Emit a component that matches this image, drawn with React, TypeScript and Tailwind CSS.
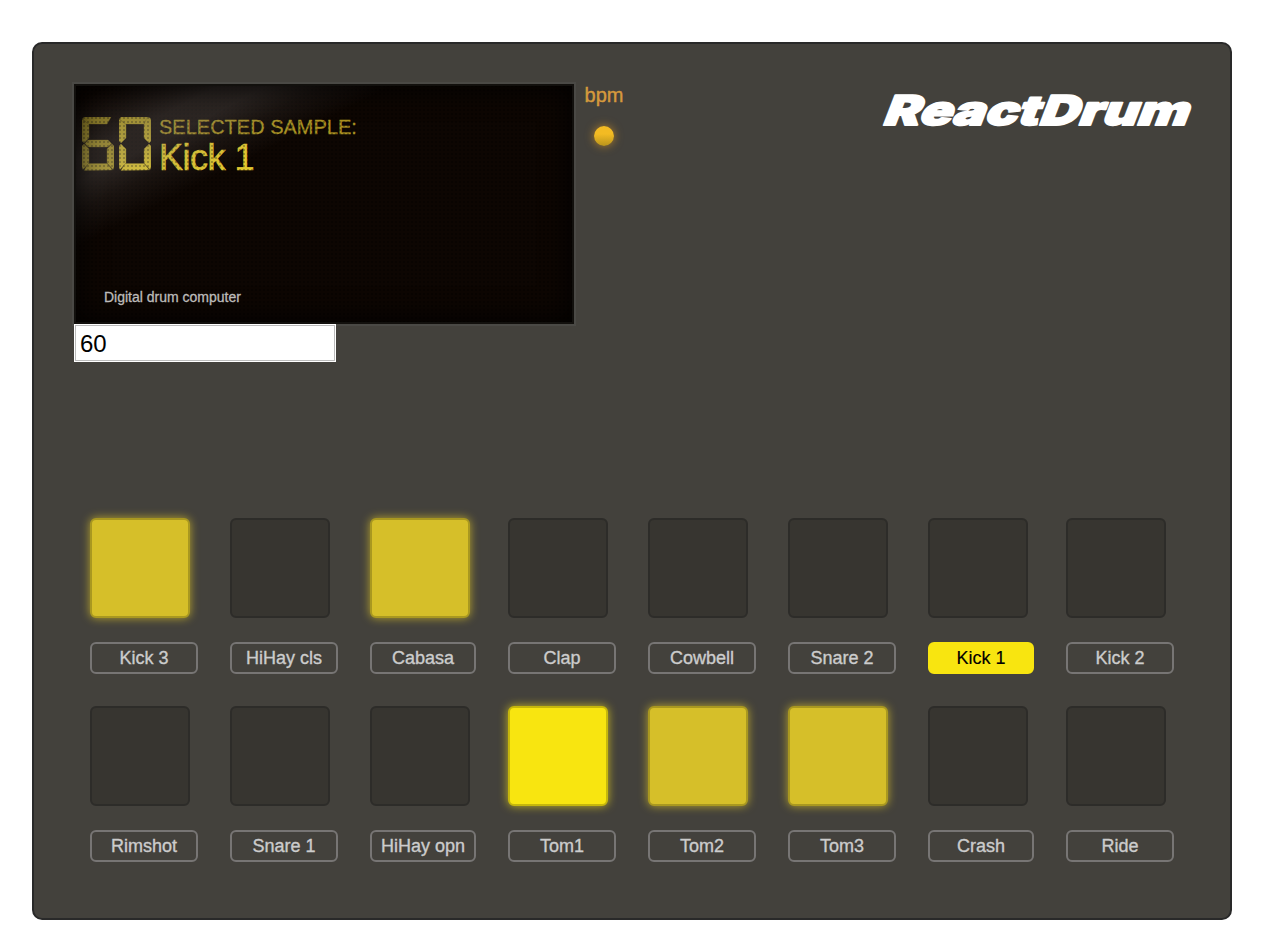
import React from "react";

const rows = [
  [["Kick 3", 1], ["HiHay cls", 0], ["Cabasa", 1], ["Clap", 0], ["Cowbell", 0], ["Snare 2", 0], ["Kick 1", 0], ["Kick 2", 0]],
  [["Rimshot", 0], ["Snare 1", 0], ["HiHay opn", 0], ["Tom1", 2], ["Tom2", 1], ["Tom3", 1], ["Crash", 0], ["Ride", 0]],
] as [string, number][][];

const padStyles = [
  "bg-[#373530] border-[#2d2c29]",
  "bg-[#d6bf29] border-[#a99820] shadow-[0_0_10px_rgba(212,189,42,0.8)]",
  "bg-[#f8e510] border-[#c6b70c] shadow-[0_0_10px_rgba(230,210,30,0.8)]",
];

const segments: Record<string, string> = {
  a: "2,0 29,0 25,7 6,7 0.5,2",
  b: "28,0 31,1 32,3 32,24 30,26 25,21 25,7.5",
  c: "30,27 32,29 32,50 31,52.5 25,46 25,32",
  d: "6,46.5 25,46.5 30.5,53 2,53.5",
  e: "2,27 7,32 7,46 1,52.5 0,50 0,29",
  f: "0,3 0.5,2.5 7,7.5 7,21 2,26 0,24",
  g: "6,23 26,23 29.5,26.5 26,30 6,30 3,26.5",
};

const lit: Record<string, string> = {
  "0": "abcdef", "1": "bc", "2": "abdeg", "3": "abcdg", "4": "bcfg",
  "5": "acdfg", "6": "acdefg", "7": "abc", "8": "abcdefg", "9": "abcdfg",
};

function Digit({ value }: { value: string }) {
  return (
    <svg className="h-[54px] w-[32px]" viewBox="0 0 32 54" fill="url(#glow)">
      <defs>
        <linearGradient id="glow" x1="0" y1="0" x2="0" y2="54" gradientUnits="userSpaceOnUse">
          <stop offset="0" stopColor="#a99522" />
          <stop offset="1" stopColor="#e3cb32" />
        </linearGradient>
      </defs>
      {lit[value].split("").map((s) => (
        <polygon key={s} points={segments[s]} stroke="#8a7821" strokeWidth="0.4" />
      ))}
    </svg>
  );
}

function Screen() {
  return (
    <div className="relative h-[244px] w-[504px] shrink-0 border-2 border-[#4a4945] bg-[#0d0602] font-['Liberation_Sans',sans-serif]">
      <div className="flex h-full flex-col pl-2 pt-[33px]">
        <div className="flex">
          <div className="flex gap-[5px]" role="img" aria-label="60">
            <div className="opacity-80"><Digit value="6" /></div>
            <Digit value="0" />
          </div>
          <div className="ml-2 text-[#e0c72f]">
            <div className="text-[20px] leading-5 text-[#a99221] [-webkit-text-stroke:0.3px]">SELECTED SAMPLE:</div>
            <div className="pt-px text-[36px] leading-[40px] tracking-[-0.5px] [-webkit-text-stroke:0.6px]">Kick 1</div>
          </div>
        </div>
        <div className="relative z-10 ml-[22px] mt-[109px] text-[14px] leading-5 text-[#bdbbb9] [-webkit-text-stroke:0.3px]">Digital drum computer</div>
      </div>
      <div className="pointer-events-none absolute inset-0 bg-[radial-gradient(circle,rgba(0,0,0,0.28)_0.8px,transparent_1.3px)] bg-[size:4px_4px]" />
      <div className="pointer-events-none absolute inset-0 border-2 border-[#12100d] bg-[linear-gradient(153deg,rgba(255,255,255,0)_3%,rgba(125,120,120,0.28)_15%,rgba(125,120,120,0.28)_20%,rgba(125,120,120,0.12)_26%,rgba(255,255,255,0)_33%)] shadow-[inset_0_0_30px_#000]" />
    </div>
  );
}

export default function App() {
  return (
    <div className="px-8 pt-[42px] font-['Liberation_Sans',sans-serif]">
      <main className="h-[878px] w-[1200px] rounded-[10px] border-2 border-[#292929] bg-[#43413c] pl-[38px] pt-[38px]">
        <header className="flex h-[436px]">
          <div>
            <Screen />
            <input
              className="relative -top-0.5 ml-0.5 block h-[38px] w-[262px] border border-white bg-white pl-[5px] pt-0.5 text-[24px] text-black shadow-[inset_0_0_0_1px_#bbb] outline-none"
              defaultValue="60"
            />
          </div>
          <div className="ml-2 flex w-10 flex-col items-center pt-px">
            <span className="text-[20px] leading-6 text-[#d69a3c] [-webkit-text-stroke:0.4px]">bpm</span>
            <span className="mt-[19px] size-5 rounded-full bg-linear-to-b from-[#f3bb23] from-40% to-[#b9941c] shadow-[0_0_10px_rgba(225,155,35,0.7)]" />
          </div>
          <svg className="ml-[247px] mt-[5px] h-[48px] w-[334px] overflow-visible" viewBox="0 0 334 48">
            <text
              x="0" y="0" transform="translate(10.5 38) skewX(-21)" textLength="305" lengthAdjust="spacingAndGlyphs"
              className="fill-white stroke-white font-['Inter',sans-serif] text-[41px] font-black" strokeWidth="1.8" strokeLinejoin="round"
            >
              ReactDrum
            </text>
          </svg>
        </header>
        <section className="flex flex-col gap-8 pl-[18px]">
          {rows.map((row, r) => (
            <div key={r} className="grid grid-cols-[140px_140px_138px_140px_140px_140px_138px_140px]">
              {row.map(([name, state]) => (
                <div key={name} className="flex flex-col gap-6 pr-8">
                  <button className={`size-[100px] rounded-[6px] border-2 ${padStyles[state]}`} />
                  <button
                    className={`h-8 whitespace-nowrap rounded-[6px] border-2 text-[18px] leading-7 ${
                      name === "Kick 1" ? "border-[#f8e510] bg-[#f8e510] text-black [-webkit-text-stroke:0.15px]" : "border-[#777574] text-[#ccc] [-webkit-text-stroke:0.35px]"
                    }`}
                  >
                    {name}
                  </button>
                </div>
              ))}
            </div>
          ))}
        </section>
      </main>
    </div>
  );
}
